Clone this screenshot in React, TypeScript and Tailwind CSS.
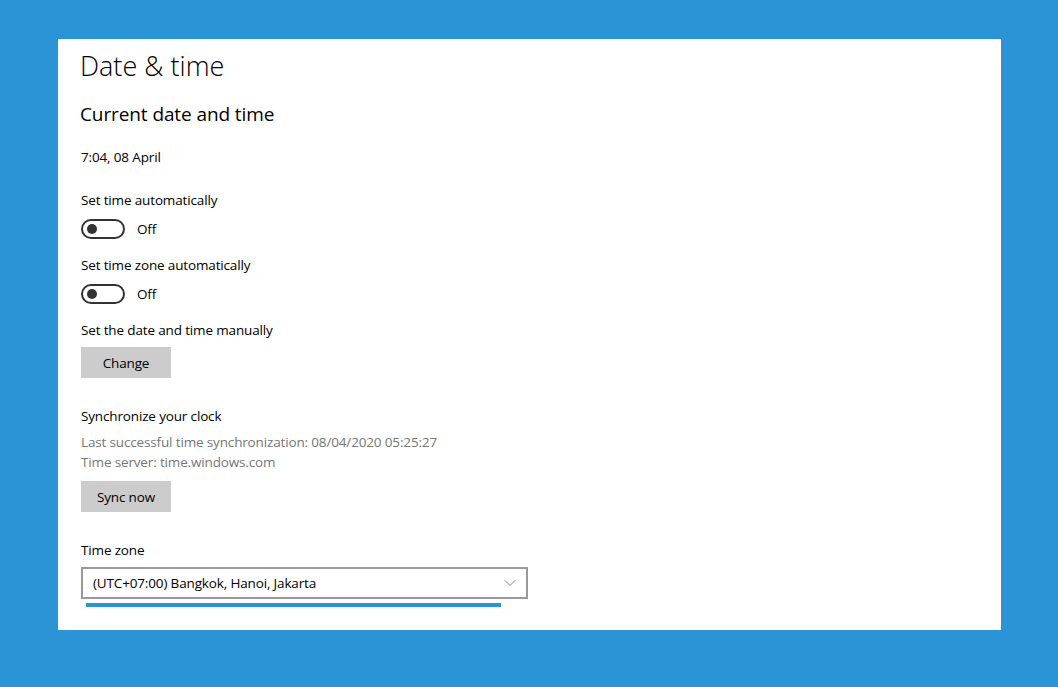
import { ChevronDown } from "lucide-react";

function Toggle() {
  return (
    <div className="flex items-center h-5">
      <div className="w-[44px] h-[20px] rounded-full border-2 border-[#333333] flex items-center pl-[4px]">
        <div className="w-[10px] h-[10px] rounded-full bg-[#333333]" />
      </div>
      <span className="ml-3 text-[13.5px] leading-5 tracking-[-0.15px] text-black">Off</span>
    </div>
  );
}

function GrayButton({ label }: { label: string }) {
  return (
    <button className="w-[90px] h-[31px] bg-[#cccccc] text-[13.5px] tracking-[-0.15px] text-black flex items-center justify-center">
      {label}
    </button>
  );
}

export default function App() {
  return (
    <div
      className="w-[1058px] h-[687px] bg-[#2a94d6] pt-[39px] pl-[58px]"
      style={{ fontFamily: '"Open Sans", "Noto Sans", sans-serif' }}
    >
      <div className="w-[943px] h-[591px] bg-white pl-[22px] pt-[9px] text-black">
        <h1 className="text-[27px] leading-[36px] font-light">Date &amp; time</h1>

        <h2 className="mt-[16px] text-[19px] leading-[28px] tracking-[-0.1px]">Current date and time</h2>

        <div className="text-[13.5px] leading-5 tracking-[-0.15px] pl-px">
          <p className="mt-[19px]">7:04, 08 April</p>

          <p className="mt-[23px]">Set time automatically</p>
          <div className="mt-[9px]">
            <Toggle />
          </div>

          <p className="mt-[16px]">Set time zone automatically</p>
          <div className="mt-[9px]">
            <Toggle />
          </div>

          <p className="mt-[16px]">Set the date and time manually</p>
          <div className="mt-[7px]">
            <GrayButton label="Change" />
          </div>

          <p className="mt-[28px]">Synchronize your clock</p>
          <p className="mt-[6px] text-[#767676]">
            Last successful time synchronization: 08/04/2020 05:25:27
          </p>
          <p className="text-[#767676]">Time server: time.windows.com</p>
          <div className="mt-[9px]">
            <GrayButton label="Sync now" />
          </div>

          <p className="mt-[28px]">Time zone</p>
          <div className="mt-[7px]">
            <div className="w-[447px] h-[32px] border-2 border-[#999999] flex items-center justify-between pl-[10px] pr-[6px]">
              <span className="text-black">(UTC+07:00) Bangkok, Hanoi, Jakarta</span>
              <ChevronDown className="w-[20px] h-[20px] text-[#666666]" strokeWidth={1} />
            </div>
            <div className="mt-[4px] ml-[5px] w-[415px] h-[4px] bg-[#2a94d6]" />
          </div>
        </div>
      </div>
    </div>
  );
}
